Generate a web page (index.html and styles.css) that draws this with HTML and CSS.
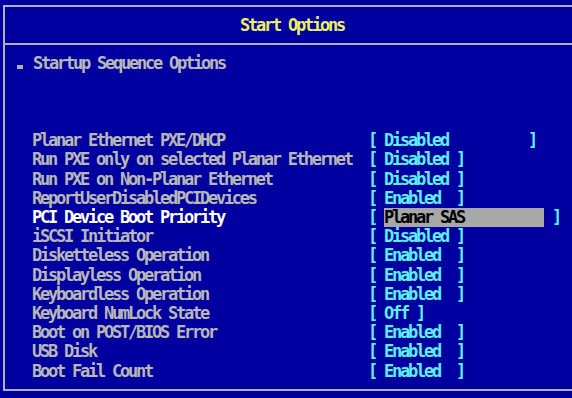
FILE: index.html
```html
<!DOCTYPE html>
<html>
<head>
<meta charset="utf-8">
<link rel="stylesheet" href="styles.css">
</head>
<body>
<div class="frame">
  <div class="header"><span class="title">Start Options</span></div>
  <div class="content">
    <div class="section"><span class="bullet"></span><span class="section-name">Startup Sequence Options</span></div>
    <div class="spacer"></div>
    <div class="options">
      <div class="label">Planar Ethernet PXE/DHCP</div><div class="value">[ Disabled          ]</div>
      <div class="label">Run PXE only on selected Planar Ethernet</div><div class="value">[ Disabled ]</div>
      <div class="label">Run PXE on Non-Planar Ethernet</div><div class="value">[ Disabled ]</div>
      <div class="label">ReportUserDisabledPCIDevices</div><div class="value">[ Enabled  ]</div>
      <div class="label selected">PCI Device Boot Priority</div><div class="value">[ <span class="highlight">Planar SAS          </span> ]</div>
      <div class="label">iSCSI Initiator</div><div class="value">[ Disabled ]</div>
      <div class="label">Disketteless Operation</div><div class="value">[ Enabled  ]</div>
      <div class="label">Displayless Operation</div><div class="value">[ Enabled  ]</div>
      <div class="label">Keyboardless Operation</div><div class="value">[ Enabled  ]</div>
      <div class="label">Keyboard NumLock State</div><div class="value">[ Off ]</div>
      <div class="label">Boot on POST/BIOS Error</div><div class="value">[ Enabled  ]</div>
      <div class="label">USB Disk</div><div class="value">[ Enabled  ]</div>
      <div class="label">Boot Fail Count</div><div class="value">[ Enabled  ]</div>
    </div>
  </div>
</div>
</body>
</html>
```
FILE: styles.css
```css
html, body {
  margin: 0;
  padding: 0;
  background: #0000a0;
  overflow: hidden;
}
body {
  width: 572px;
  height: 398px;
  font-family: "DejaVu Sans Mono", "Liberation Mono", monospace;
  font-weight: bold;
  font-size: 17px;
  letter-spacing: -2.24px;
}
.frame {
  margin: 5px 0 0 3px;
  border-top: 2px solid #b0b0b8;
  border-left: 2px solid #b0b0b8;
  border-bottom: 2px solid #b0b0b8;
  height: 386px;
  box-sizing: border-box;
  display: flex;
  flex-direction: column;
}
.header {
  height: 36px;
  line-height: 36px;
  border-bottom: 2px solid #b0b0b8;
  padding-left: 235px;
  white-space: pre;
}
.title {
  color: #e8f060;
}
.content {
  padding: 9.4px 0 0 27px;
  line-height: 19.2px;
}
.section {
  display: flex;
  align-items: center;
  color: #b8b8b4;
  white-space: pre;
}
.bullet {
  display: inline-block;
  width: 6px;
  height: 4px;
  background: #b0b0b0;
  margin: 7px 10px 0 -15px;
}
.spacer {
  height: 57.6px;
}
.options {
  display: grid;
  grid-template-columns: 336px auto;
  white-space: pre;
}
.label {
  color: #b8b8b4;
}
.label.selected {
  color: #ffffff;
}
.value {
  color: #5cf0f0;
}
.highlight {
  display: inline-block;
  height: 19.2px;
  vertical-align: top;
  background: #a8a8a8;
  color: #000000;
}
```
